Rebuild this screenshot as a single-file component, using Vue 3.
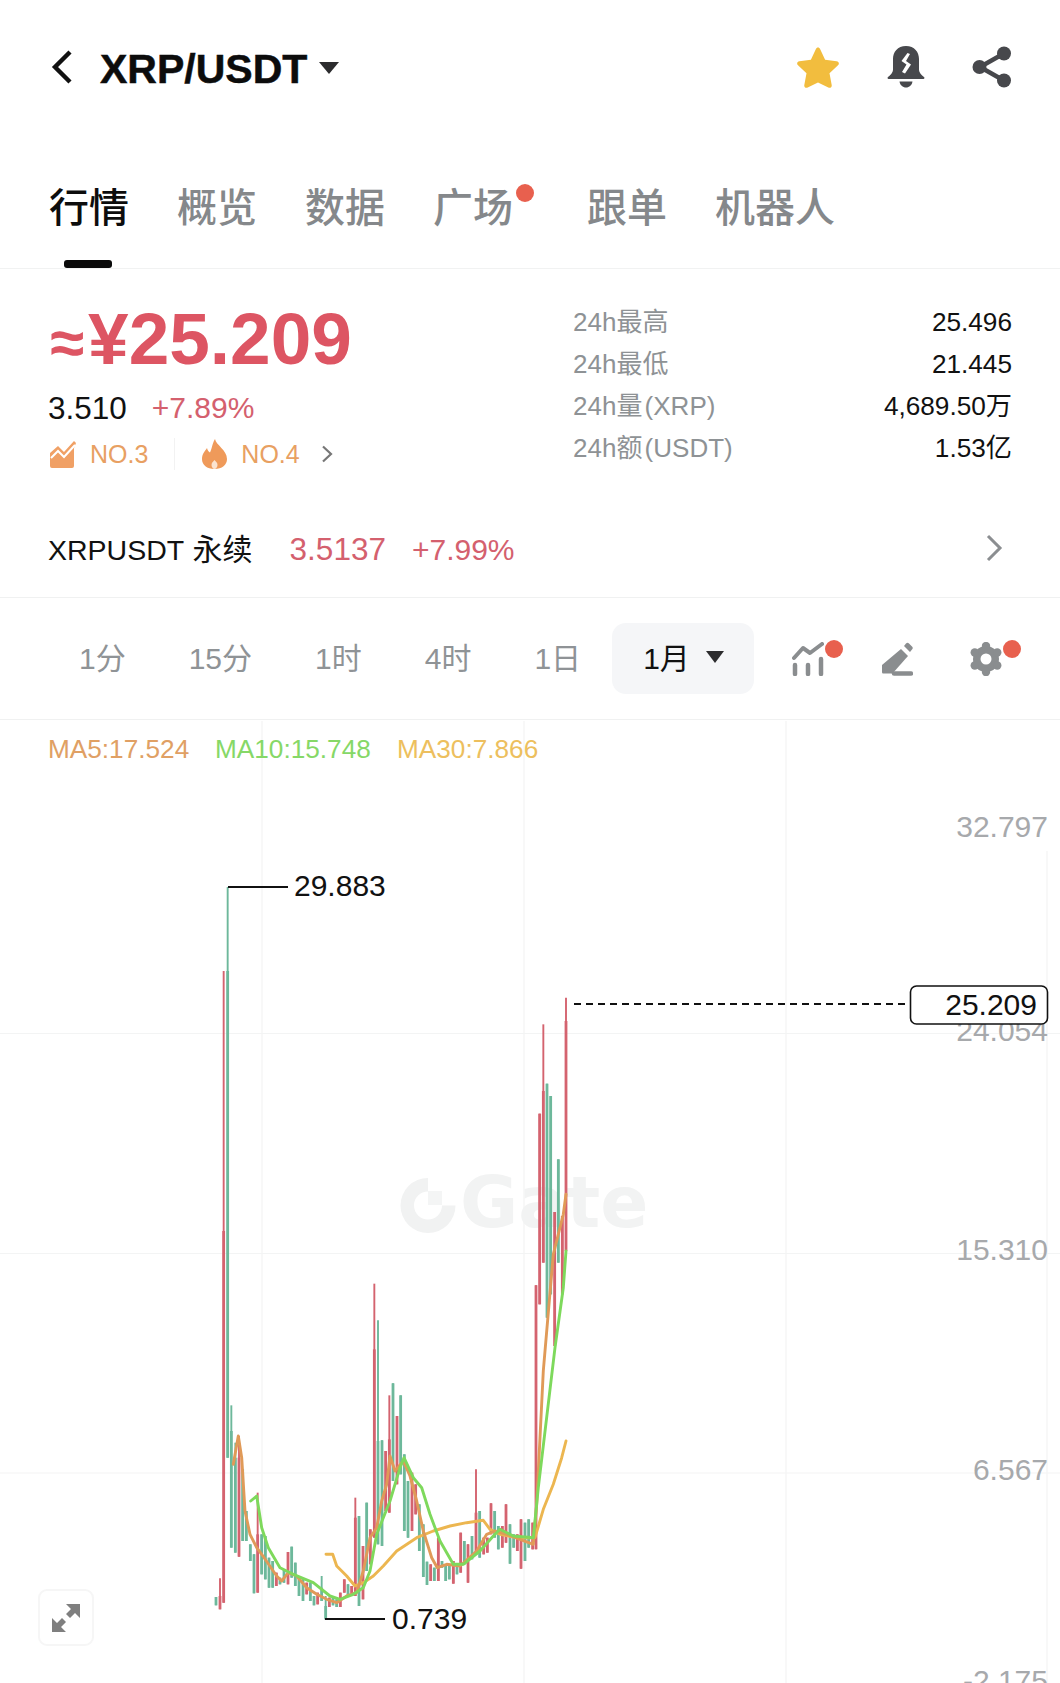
<script setup>
import { computed } from 'vue'

const tabs = ['行情', '概览', '数据', '广场', '跟单', '机器人']
const stats = [
  ['24h最高', '25.496'],
  ['24h最低', '21.445'],
  ['24h量 (XRP)', '4,689.50万'],
  ['24h额 (USDT)', '1.53亿'],
]
const periods = ['1分', '15分', '1时', '4时', '1日']
const axis = [
  ['32.797', 827],
  ['24.054', 1031],
  ['15.310', 1250],
  ['6.567', 1470],
  ['-2.175', 1681],
]

// [x, colour, high, low, bodyTop] in crop coordinates, converted below
const raw = [
  [48,'g',978,1003],[60,'r',922,1015,975],[71,'r',-900,995,-120],[83,'g',-1152,560,-900],
  [94,'g',403,830,480],[106,'g',515,845,560],[117,'r',495,857,560],[128,'g',595,810],
  [139,'g',720,810],[151,'g',820,870],[162,'g',850,967],[173,'r',665,965,790],
  [185,'g',790,910],[196,'g',795,925],[207,'g',860,950],[218,'g',870,950],
  [229,'r',905,945],[240,'g',920,940],[252,'g',895,935],[264,'r',843,940],
  [275,'g',827,920],[286,'g',875,945],[297,'g',915,975],[309,'g',925,990],
  [320,'r',935,970],[331,'g',935,990],[342,'g',975,1003],[353,'r',965,1000],
  [365,'g',915,990,950],[377,'g',975,1045,1005],[388,'r',980,1008],[399,'g',980,1003],
  [410,'g',985,1008],[421,'r',965,1008],[433,'r',925,965],[444,'g',940,975],
  [455,'r',945,975],[466,'r',680,975,740],[477,'g',735,1005],[489,'r',825,985],
  [500,'g',695,900],[511,'r',775,880],[523,'r',38,800,235],[534,'g',148,820,510],
  [546,'g',508,825],[557,'r',540,720],[568,'r',373,725,505],[579,'g',337,630],
  [591,'r',435,640],[602,'g',373,610],[613,'g',550,780],[624,'g',630,800],
  [636,'r',605,780],[647,'r',640,730],[658,'g',700,840],[670,'g',760,918],
  [681,'g',872,942],[692,'r',880,930],[703,'g',890,930],[715,'r',800,930],
  [726,'g',870,890],[737,'g',880,930],[748,'g',880,925],[760,'r',870,938],
  [771,'g',880,910],[782,'r',785,905],[793,'g',810,880],[804,'r',820,935],
  [816,'g',795,865],[828,'r',595,850,725],[839,'g',720,860],[851,'r',800,850],
  [862,'r',800,845],[873,'r',697,790],[884,'g',720,800],[895,'g',765,835],
  [907,'r',765,830],[918,'r',700,815],[930,'g',760,878],[941,'g',790,830],
  [952,'r',790,840],[963,'r',745,893],[975,'g',755,870],[986,'g',745,830],
  [998,'r',755,835],[1008,'r',43,835],[1019,'r',-472,100],[1030,'r',-740,-25,-540],
  [1041,'g',-562,140],[1052,'g',-525,70],[1064,'r',-177,225],[1075,'g',-335,-25],
  [1087,'r',-165,70],[1098,'r',-820,-60,-750],
]

const px = v => 200 + v / 3
const py = v => 1270 + v / 3

const candles = computed(() =>
  raw.map(([x, c, hi, lo, body]) => ({
    x: px(x),
    color: c === 'r' ? '#d4636f' : '#6db89b',
    y1: py(hi),
    y2: py(lo),
    by: py(body === undefined ? hi : body),
  }))
)

const line = pts => pts.map(([x, y]) => `${px(x).toFixed(1)},${py(y).toFixed(1)}`).join(' ')

const ma5 = line([[100,580],[115,495],[125,560],[135,720],[150,790],[170,830],[185,850],[230,915],[245,930],[265,905],[290,915],[320,950],[350,970],[380,985],[410,995],[440,975],[470,965],[490,900],[510,800],[530,770],[545,690],[560,640],[570,555],[585,600],[610,570],[630,615],[650,690],[670,780],[695,860],[712,890],[740,880],[780,885],[830,840],[860,790],[885,780],[920,790],[960,805],[1000,820],[1010,700],[1030,300],[1060,-50],[1090,-170],[1098,-230]])
const ma10 = line([[152,690],[170,675],[185,770],[205,830],[240,890],[280,910],[340,935],[390,975],[420,985],[460,970],[490,950],[510,900],[530,790],[570,690],[600,590],[612,560],[640,620],[665,650],[690,730],[720,810],[760,880],[790,880],[840,840],[880,795],[900,775],[940,795],[1000,800],[1015,650],[1065,230],[1090,50],[1098,-60]])
const ma30 = line([[378,850],[398,850],[410,885],[440,915],[465,945],[490,935],[520,915],[550,885],[590,840],[650,800],[700,780],[750,765],[800,755],[850,748],[870,775],[900,790],[950,800],[1005,800],[1030,715],[1060,640],[1085,560],[1098,510]])

const lobes = [0, 60, 120, 180, 240, 300].map(a => ({
  cx: 16 + 13 * Math.sin((a * Math.PI) / 180),
  cy: 17 - 13 * Math.cos((a * Math.PI) / 180),
}))
</script>

<template>
  <div class="page">
    <header class="top">
      <svg class="back" width="24" height="34" viewBox="0 0 24 34"><path d="M20 2 5 17l15 15" fill="none" stroke="#111" stroke-width="4.4" /></svg>
      <span class="pair">XRP/USDT</span>
      <span class="caret big"></span>
      <div class="top-icons">
        <svg width="44" height="42" viewBox="0 0 44 42"><path d="M22 1.500c1 0 1.700.6 2.200 1.700l4.900 10.600 11.500 1.500c2.300.3 3 2.500 1.400 4l-8.500 8 2.200 11.600c.4 2.200-1.500 3.600-3.400 2.500L22 36.500l-10.300 4.900c-1.900 1.100-3.800-.3-3.400-2.500l2.200-11.600-8.500-8c-1.600-1.500-.9-3.700 1.400-4l11.500-1.500 4.900-10.600C20.300 2.100 21 1.500 22 1.500z" fill="#f2bd3e" /></svg>
        <svg width="38" height="42" viewBox="0 0 38 42"><path d="M19 0C10.500 0 6 6 6 13v11c0 2.500-2.500 5-5 7-.8.600-.5 2 .6 2h34.800c1.100 0 1.400-1.400.6-2-2.500-2-5-4.500-5-7V13C32 6 27.500 0 19 0z" fill="#47484c" /><path d="M20.500 7 14.500 15l5 3.500-4.500 7.500 3 1.500 6-9-5-3.500 4-7z" fill="#fff" /><path d="M12.500 35.500h13c-.5 3.500-3.200 6-6.500 6s-6-2.500-6.500-6z" fill="#47484c" /></svg>
        <svg width="40" height="42" viewBox="0 0 40 42"><path d="M31 8 8 21l23 13" fill="none" stroke="#47484c" stroke-width="4.500" /><circle cx="32" cy="7.500" r="7" fill="#47484c" /><circle cx="7.500" cy="21" r="7" fill="#47484c" /><circle cx="32" cy="34.500" r="7" fill="#47484c" /></svg>
      </div>
    </header>

    <nav class="tabs">
      <span v-for="(t, i) in tabs" :key="t" class="tab" :class="{ on: i === 0, dotted: t === '广场' }">{{ t }}<i v-if="t === '广场'" class="dot"></i></span>
    </nav>

    <section class="market">
      <div class="left">
        <div class="price"><span class="approx">≈</span>¥25.209</div>
        <div class="sub"><span class="usd">3.510</span><span class="red">+7.89%</span></div>
        <div class="rank">
          <svg width="27" height="27" viewBox="0 0 27 27"><path d="M0 12 8 5l6 6L24 0l2 2-2 5v18a2 2 0 0 1-2 2H2a2 2 0 0 1-2-2z" fill="#f0a065" /><path d="M1 17l7-7 6 6 11-12" fill="none" stroke="#fff" stroke-width="2" /></svg>
          <span class="no">NO.3</span>
          <i class="sep"></i>
          <svg width="27" height="30" viewBox="0 0 27 30"><path d="M14 0c1 6 12 11 12 20 0 6-5 10-12.500 10S1 26 1 20c0-5 3-8 5-11 .5 2 1.500 4 3 4.500C11 10 11 5 14 0z" fill="#ef9a5a" /><path d="M13.500 21c1.500 1.500 3 3 3 5s-1.500 4-3 4-3-2-3-4 1.500-3.500 3-5z" fill="#fbe3d0" /></svg>
          <span class="no">NO.4</span>
          <svg class="chev-sm" width="13" height="18" viewBox="0 0 13 18"><path d="M2 1.500 10 9l-8 7.500" fill="none" stroke="#777" stroke-width="2.200" /></svg>
        </div>
      </div>
      <div class="stats">
        <div v-for="s in stats" :key="s[0]" class="stat"><span class="label">{{ s[0] }}</span><span>{{ s[1] }}</span></div>
      </div>
    </section>

    <div class="perp">
      <span class="perp-name">XRPUSDT <span class="perp-cn">永续</span></span>
      <span class="red perp-price">3.5137</span>
      <span class="red perp-pct">+7.99%</span>
      <svg class="chev" width="18" height="28" viewBox="0 0 18 28"><path d="M3 2l12 12L3 26" fill="none" stroke="#8b8e91" stroke-width="3" /></svg>
    </div>

    <div class="bar">
      <span v-for="p in periods" :key="p" class="period">{{ p }}</span>
      <span class="pill">1月<span class="caret"></span></span>
      <div class="tools">
        <span class="tool">
          <svg width="32" height="34" viewBox="0 0 32 34"><path d="M2 16 11 6l7 5L30 2" fill="none" stroke="#8a8d8f" stroke-width="4" stroke-linecap="round" stroke-linejoin="round" /><path d="M3 23v9M16 23v9M29 17v15" stroke="#8a8d8f" stroke-width="4.500" stroke-linecap="round" /></svg>
          <i class="dot"></i>
        </span>
        <span class="tool">
          <svg width="32" height="34" viewBox="0 0 32 34"><path d="M20 7 1 23v7c0 1 .5 1.500 1.500 1.500h9L27 14z" fill="#8a8d8f" /><path d="M23 4l2-2.500c1-1 2-1 3 0l3 3c1 1 1 2 0 3L29 10z" fill="#8a8d8f" /><path d="M13 31.500h17" stroke="#8a8d8f" stroke-width="4.500" stroke-linecap="round" /></svg>
        </span>
        <span class="tool">
          <svg width="32" height="34" viewBox="0 0 32 34"><circle cx="16" cy="17" r="13" fill="#8a8d8f" /><circle v-for="(l, i) in lobes" :key="i" :cx="l.cx" :cy="l.cy" r="4.200" fill="#8a8d8f" /><circle cx="16" cy="17" r="5.500" fill="#fff" /></svg>
          <i class="dot"></i>
        </span>
      </div>
    </div>

    <div class="chart">
      <svg class="plot" width="1060" height="964" viewBox="0 719 1060 964">
        <g stroke="#f3f4f4" stroke-width="1.200">
          <path d="M262 720V1683M524 720V1683M786 720V1683M1047 850V1683" />
          <path d="M0 1032.500H1060M0 1252.500H1060M0 1472H1060" />
        </g>

        <g class="watermark">
          <path d="M428 1177a27.500 27.500 0 1 0 27.500 27.500H442a14 14 0 1 1-14-14z" fill="#f1f2f2" />
          <rect x="428" y="1190" width="14" height="14" fill="#f4f5f5" />
          <text x="460" y="1226" class="wm-text">Gate</text>
        </g>

        <text class="ma" x="48" y="757" fill="#e0a064">MA5:17.524</text>
        <text class="ma" x="215" y="757" fill="#86d867">MA10:15.748</text>
        <text class="ma" x="397" y="757" fill="#edbf5e">MA30:7.866</text>

        <text v-for="a in axis" :key="a[0]" class="axis" x="1048" :y="a[1] + 9">{{ a[0] }}</text>

        <g v-for="(k, i) in candles" :key="i">
          <line :x1="k.x" :x2="k.x" :y1="k.y1" :y2="k.y2" :stroke="k.color" stroke-width="1.900" />
          <line :x1="k.x" :x2="k.x" :y1="k.by" :y2="k.y2" :stroke="k.color" stroke-width="2.800" />
        </g>

        <polyline :points="ma30" class="ma-line" stroke="#ecb650" />
        <polyline :points="ma5" class="ma-line" stroke="#e09a58" />
        <polyline :points="ma10" class="ma-line" stroke="#7ed95c" />

        <path d="M228 886H288" fill="none" stroke="#111" stroke-width="1.800" />
        <text class="mark" x="294" y="895">29.883</text>
        <path d="M325 1618H385" fill="none" stroke="#111" stroke-width="1.800" />
        <text class="mark" x="392" y="1628">0.739</text>

        <path d="M574 1003H905" stroke="#111" stroke-width="1.800" stroke-dasharray="7 5" />
        <rect x="910.500" y="985" width="137" height="38" rx="6" fill="#fff" stroke="#111" stroke-width="1.600" />
        <text class="mark" x="1037" y="1014" text-anchor="end">25.209</text>
      </svg>

      <button class="expand">
        <svg width="30" height="30" viewBox="0 0 30 30"><path d="M15 1h14v14l-5-5-5 5-4-4 5-5zM1 29V15l5 5 5-5 4 4-5 5 5 5z" fill="#7f7f7f" /></svg>
      </button>
    </div>
  </div>
</template>

<style>
html, body { margin: 0; background: #fff; }
</style>

<style scoped>
.page {
  width: 1060px;
  height: 1683px;
  overflow: hidden;
  font-family: "Liberation Sans", "Noto Sans CJK SC", sans-serif;
  color: #111;
  background: #fff;
}
.top {
  display: flex;
  align-items: center;
  height: 134px;
  padding: 0 48px 0 50px;
  box-sizing: border-box;
}
.back { margin-right: 26px; }
.pair {
  padding-top: 4px;
  font-size: 41px;
  font-weight: 700;
  color: #0c0c0c;
  -webkit-text-stroke: 0.5px #0c0c0c;
}
.caret {
  display: inline-block;
  width: 0;
  height: 0;
  margin-left: 16px;
  border-left: 9px solid transparent;
  border-right: 9px solid transparent;
  border-top: 12px solid #2c2c2e;
}
.caret.big { margin-left: 12px; margin-top: 2px; border-left-width: 10px; border-right-width: 10px; }
.pill .caret { margin-top: 3px; }
.top-icons { margin-left: auto; display: flex; align-items: center; gap: 47px; }
.tabs {
  display: flex;
  gap: 48px;
  height: 135px;
  padding: 54px 0 0 49px;
  box-sizing: border-box;
  border-bottom: 1px solid #f1f2f2;
  font-size: 40px;
  line-height: 40px;
  font-weight: 500;
  color: #85888b;
}
.tab { position: relative; height: 40px; }
.tab.on { color: #0d0d0d; }
.tab.on::after {
  content: "";
  position: absolute;
  left: 15px;
  bottom: -40px;
  width: 48px;
  height: 8px;
  border-radius: 3px;
  background: #0a0a0a;
}
.tab.dotted { margin-right: 26px; }
.dot {
  position: absolute;
  width: 18px;
  height: 18px;
  border-radius: 50%;
  background: #e8604e;
}
.tab .dot { left: 83px; top: -4px; }
.market {
  display: flex;
  justify-content: space-between;
  height: 228px;
  padding: 32px 48px 0;
  box-sizing: border-box;
}
.price {
  padding-top: 2px;
  font-size: 73px;
  line-height: 72px;
  font-weight: 700;
  color: #dd5563;
}
.approx { margin: 0 4px 0 2px; font-size: 62px; }
.sub {
  display: flex;
  gap: 25px;
  margin-top: 10px;
  font-size: 30px;
  line-height: 38px;
}
.usd { font-size: 31.500px; }
.red { color: #d4606e; }
.rank {
  display: flex;
  align-items: center;
  margin: 9px 0 0 2px;
  height: 36px;
  font-size: 25px;
  color: #e8a062;
}
.no { margin-left: 13px; }
.sep { width: 1px; height: 32px; margin: 0 26px; background: #f2f2f2; }
.chev-sm { margin-left: 21px; }
.stats { width: 439px; font-size: 26.200px; }
.stat { display: flex; justify-content: space-between; height: 42px; line-height: 42px; }
.label { color: #8e9295; font-size: 26px; word-spacing: -5px; }
.perp {
  display: flex;
  align-items: baseline;
  height: 100px;
  padding: 0 48px;
  border-bottom: 1px solid #f0f1f1;
  line-height: 104px;
  font-size: 31.500px;
}
.perp-name { margin-right: 37px; font-size: 28.500px; word-spacing: 1px; }
.perp-cn { font-size: 30px; }
.perp-price { margin-right: 26px; }
.perp-pct { font-size: 30px; }
.chev { align-self: center; margin-left: auto; margin-right: 9px; margin-top: 2px; }
.bar {
  display: flex;
  align-items: center;
  gap: 63px;
  height: 121px;
  padding: 0 0 0 79px;
  border-bottom: 1px solid #f0f1f1;
  font-size: 30px;
  color: #8f9396;
}
.period { margin-bottom: 6px; }
.pill {
  display: flex;
  align-items: center;
  width: 142px;
  height: 71px;
  margin: 0 0 0 -32px;
  padding: 0 0 6px 31px;
  box-sizing: border-box;
  border-radius: 14px;
  background: #f5f6f8;
  color: #111;
}
.tools { display: flex; gap: 57px; margin-left: -25px; }
.tool { position: relative; display: block; width: 32px; height: 34px; }
.tool .dot { left: 33px; top: -2px; }
.chart { position: relative; height: 964px; }
.plot { display: block; }
.ma { font-size: 26.200px; }
.axis { font-size: 30px; fill: #a7a9ac; text-anchor: end; }
.mark { font-size: 30px; fill: #111; }
.wm-text { font-family: "DejaVu Sans", sans-serif; font-size: 71px; font-weight: 700; fill: #f2f3f3; }
.ma-line { fill: none; stroke-width: 2.900; stroke-linejoin: round; stroke-linecap: round; }
.expand {
  position: absolute;
  left: 38px;
  top: 869px;
  display: flex;
  align-items: center;
  justify-content: center;
  width: 56px;
  height: 57px;
  padding: 0;
  border: 2px solid #f6f6f6;
  border-radius: 9px;
  background: #fff;
}
</style>
